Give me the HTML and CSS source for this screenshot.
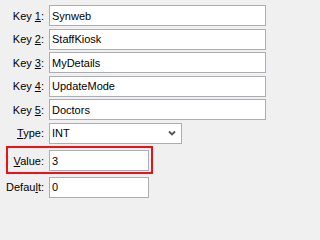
FILE: index.html
```html
<!DOCTYPE html>
<html>
<head>
<meta charset="utf-8">
<link rel="stylesheet" href="styles.css">
</head>
<body>
<div class="form">
  <div class="row"><span class="label">Key <u>1</u>:</span><div class="field wide">Synweb</div></div>
  <div class="row"><span class="label">Key <u>2</u>:</span><div class="field wide">StaffKiosk</div></div>
  <div class="row"><span class="label">Key <u>3</u>:</span><div class="field wide">MyDetails</div></div>
  <div class="row"><span class="label">Key <u>4</u>:</span><div class="field wide">UpdateMode</div></div>
  <div class="row"><span class="label">Key <u>5</u>:</span><div class="field wide">Doctors</div></div>
  <div class="row"><span class="label"><u>T</u>ype:</span><div class="field select"><span class="sel-text">INT</span><svg class="chev" width="8" height="6" viewBox="0 0 8 6"><path d="M1 1.5 L4 4.5 L7 1.5" fill="none" stroke="#555" stroke-width="1.8"/></svg></div></div>
  <div class="row highlight"><span class="label inner"><u>V</u>alue:</span><div class="field short">3</div></div>
  <div class="row"><span class="label">Defau<u>l</u>t:</span><div class="field short">0</div></div>
</div>
</body>
</html>
```
FILE: styles.css
```css
html, body {
  margin: 0;
  padding: 0;
  background: #f0f0f0;
}
body {
  font-family: "Liberation Sans", Arial, sans-serif;
  font-size: 11px;
  color: #000;
}
.form {
  display: flex;
  flex-direction: column;
  gap: 2.5px;
  padding-top: 5px;
}
.row {
  display: flex;
  align-items: center;
  gap: 5px;
}
.label {
  width: 44px;
  text-align: right;
  flex: none;
  white-space: nowrap;
}
.label u {
  text-underline-offset: 1px;
}
.field {
  box-sizing: border-box;
  height: 21px;
  background: #fff;
  border: 1px solid #abadb3;
  padding: 0 3px 0 2px;
  display: flex;
  align-items: center;
  white-space: nowrap;
}
.wide { width: 217px; }
.short { width: 100px; }
.select {
  width: 133px;
  justify-content: space-between;
  padding-right: 5px;
}
.chev { display: block; }
.highlight {
  margin-left: 6px;
  width: 147px;
  box-sizing: border-box;
  border: 2px solid #e8141a;
  padding: 2px 2px 1px 0;
}
.label.inner { width: 36px; }
```
